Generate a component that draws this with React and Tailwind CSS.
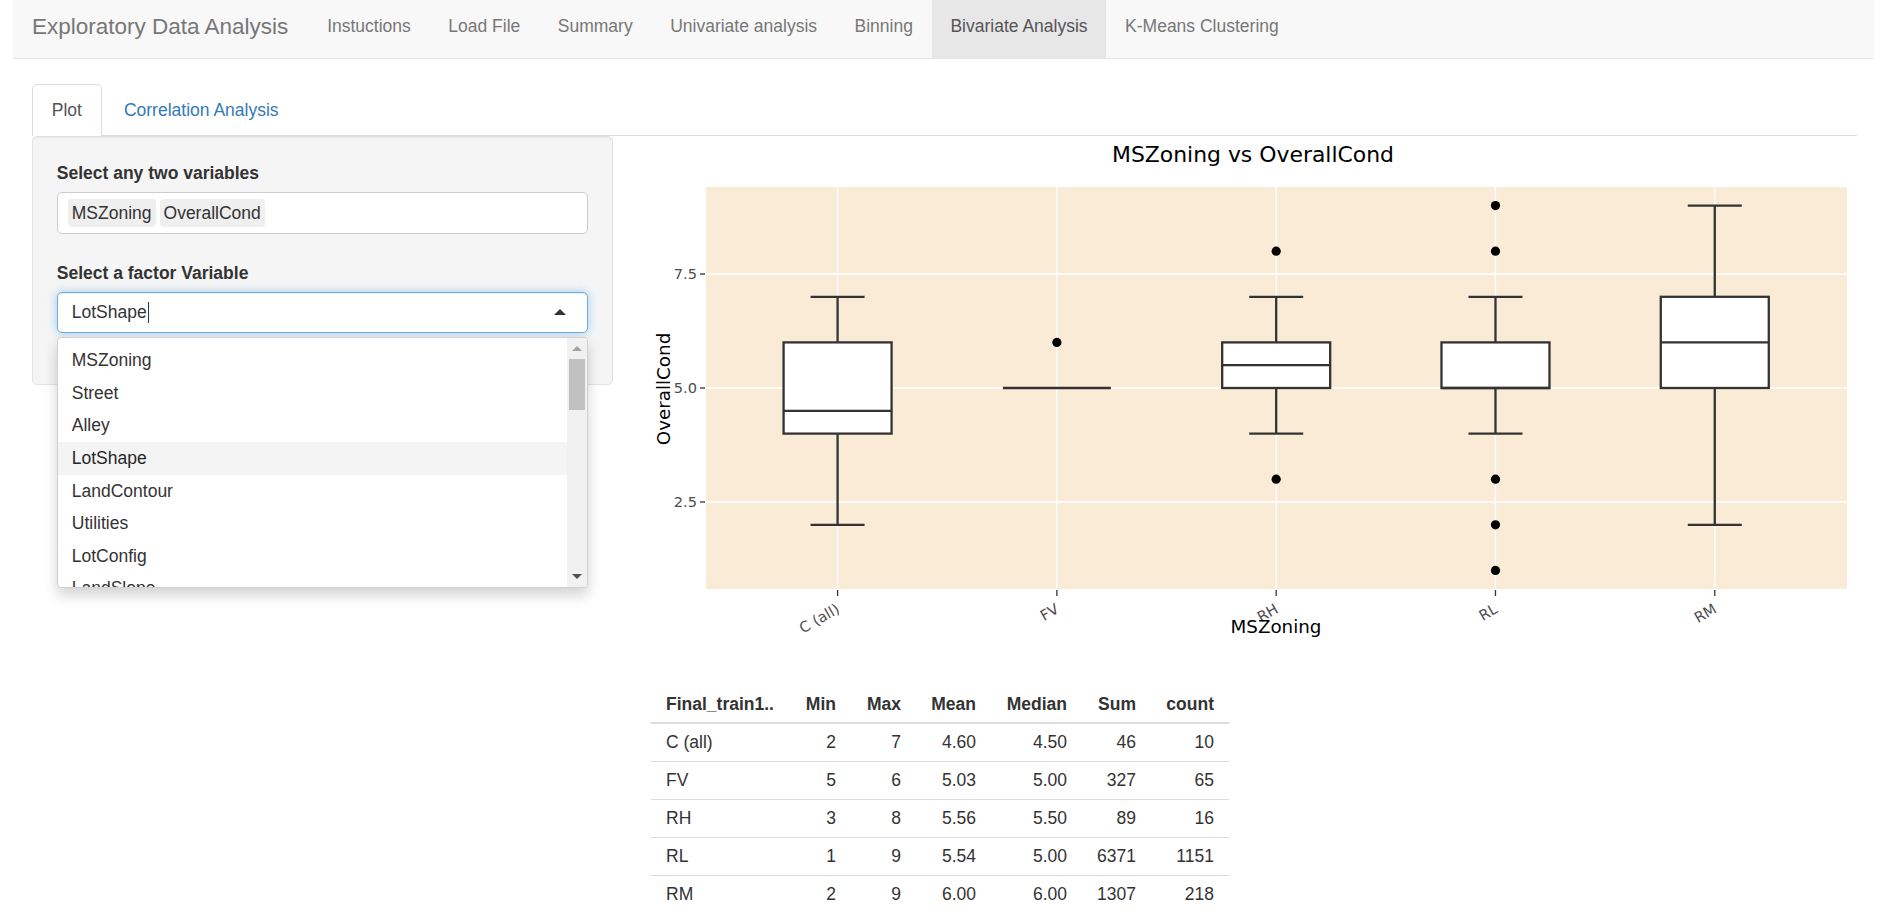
import React from "react";

const navItems = [
  "Instuctions",
  "Load File",
  "Summary",
  "Univariate analysis",
  "Binning",
  "Bivariate Analysis",
  "K-Means Clustering",
];

const options = [
  "MSZoning",
  "Street",
  "Alley",
  "LotShape",
  "LandContour",
  "Utilities",
  "LotConfig",
  "LandSlope",
];

const boxes = [
  { name: "C (all)", lo: 2, q1: 4, med: 4.5, q3: 6, hi: 7, out: [] },
  { name: "FV", lo: 5, q1: 5, med: 5, q3: 5, hi: 5, out: [6] },
  { name: "RH", lo: 4, q1: 5, med: 5.5, q3: 6, hi: 7, out: [3, 8] },
  { name: "RL", lo: 4, q1: 5, med: 5, q3: 6, hi: 7, out: [1, 2, 3, 8, 9] },
  { name: "RM", lo: 2, q1: 5, med: 6, q3: 7, hi: 9, out: [] },
];

const rows = [
  ["C (all)", "2", "7", "4.60", "4.50", "46", "10"],
  ["FV", "5", "6", "5.03", "5.00", "327", "65"],
  ["RH", "3", "8", "5.56", "5.50", "89", "16"],
  ["RL", "1", "9", "5.54", "5.00", "6371", "1151"],
  ["RM", "2", "9", "6.00", "6.00", "1307", "218"],
];

const colW = ["w-[138px]", "w-[62px]", "w-[65px]", "w-[75px]", "w-[91px]", "w-[69px]", "w-[78px]"];
const heads = ["Final_train1..", "Min", "Max", "Mean", "Median", "Sum", "count"];

// plot frame, in svg coordinates (svg sits at x=649, y=136 on the page)
const PL = 57;
const PR = 1198;
const PT = 51;
const PB = 453;
const yv = (v) => 252 - (v - 5) * 45.6;
const xc = (i) => PL + (i + 0.6) * 219.3;
const PLOT_FONT = "DejaVu Sans, Verdana, sans-serif";
const INK = "#333333";

function BoxPlot() {
  return (
    <svg width="1208" height="550" className="block">
      <text x="604" y="26" textAnchor="middle" fontFamily={PLOT_FONT} fontSize="21.9" fill="#000">
        MSZoning vs OverallCond
      </text>
      <rect x={PL} y={PT} width={PR - PL} height={PB - PT} fill="#faebd7" />
      {[2.5, 5, 7.5].map((v) => (
        <line key={v} x1={PL} x2={PR} y1={yv(v)} y2={yv(v)} stroke="#fff" strokeWidth="1.3" />
      ))}
      {boxes.map((b, i) => (
        <line key={b.name} x1={xc(i)} x2={xc(i)} y1={PT} y2={PB} stroke="#fff" strokeWidth="1.3" />
      ))}
      {[2.5, 5, 7.5].map((v) => (
        <g key={v}>
          <line x1="51" x2="56" y1={yv(v)} y2={yv(v)} stroke={INK} strokeWidth="1.3" />
          <text
            x="48"
            y={yv(v) + 5}
            textAnchor="end"
            fontFamily={PLOT_FONT}
            fontSize="14.6"
            fill="#4d4d4d"
          >
            {v.toFixed(1)}
          </text>
        </g>
      ))}
      {boxes.map((b, i) => {
        const x = xc(i);
        return (
          <g key={b.name}>
            <line x1={x} x2={x} y1="454" y2="460" stroke={INK} strokeWidth="1.3" />
            <text
              transform={`translate(${x + 3} 476) rotate(-30)`}
              textAnchor="end"
              fontFamily={PLOT_FONT}
              fontSize="14.6"
              fill="#4d4d4d"
            >
              {b.name}
            </text>
            {b.q1 === b.q3 ? (
              <line x1={x - 54} x2={x + 54} y1={yv(b.med)} y2={yv(b.med)} stroke={INK} strokeWidth="2.3" />
            ) : (
              <g stroke={INK} strokeWidth="2.3">
                <line x1={x} x2={x} y1={yv(b.q3)} y2={yv(b.hi)} />
                <line x1={x} x2={x} y1={yv(b.q1)} y2={yv(b.lo)} />
                <line x1={x - 27} x2={x + 27} y1={yv(b.hi)} y2={yv(b.hi)} />
                <line x1={x - 27} x2={x + 27} y1={yv(b.lo)} y2={yv(b.lo)} />
                <rect x={x - 54} y={yv(b.q3)} width="108" height={yv(b.q1) - yv(b.q3)} fill="#fff" />
                <line x1={x - 54} x2={x + 54} y1={yv(b.med)} y2={yv(b.med)} />
              </g>
            )}
            {b.out.map((o) => (
              <circle key={o} cx={x} cy={yv(o)} r="4.6" fill="#000" />
            ))}
          </g>
        );
      })}
      <text x="627" y="497" textAnchor="middle" fontFamily={PLOT_FONT} fontSize="18.3" fill="#000">
        MSZoning
      </text>
      <text
        transform="translate(21 253) rotate(-90)"
        textAnchor="middle"
        fontFamily={PLOT_FONT}
        fontSize="18.3"
        fill="#000"
      >
        OverallCond
      </text>
    </svg>
  );
}

function FactorSelect() {
  return (
    <div className="relative">
      <div className="flex h-[41px] items-center rounded-[5px] border border-[#66afe9] bg-white pl-[14px] shadow-[inset_0_1px_1px_rgba(0,0,0,0.075),0_0_10px_rgba(102,175,233,0.6)]">
        <span>LotShape</span>
        <span className="ml-px h-[21px] w-px bg-[#333]" />
        <span className="absolute right-[22px] top-[17px] h-0 w-0 border-x-[6px] border-b-[6px] border-x-transparent border-b-[#333]" />
      </div>
      <div className="absolute left-0 right-0 top-[45px] z-10 flex h-[251px] overflow-hidden rounded-[4px] border border-[#d0d0d0] bg-white shadow-[0_7px_14px_rgba(0,0,0,0.18)]">
        <ul className="flex-1 pt-[6.5px]">
          {options.map((o) => (
            <li
              key={o}
              className={
                "flex h-[32.6px] items-center pl-[14px] " +
                (o === "LotShape" ? "bg-[#f4f4f4] text-[#262626]" : "text-[#333]")
              }
            >
              {o}
            </li>
          ))}
        </ul>
        <div className="flex w-[20px] flex-col bg-[#f1f1f1]">
          <div className="flex h-[21px] items-center justify-center">
            <span className="h-0 w-0 border-x-[5px] border-b-[5px] border-x-transparent border-b-[#a3a3a3]" />
          </div>
          <div className="mx-[2px] h-[51px] bg-[#c1c1c1]" />
          <div className="flex-1" />
          <div className="flex h-[21px] items-center justify-center">
            <span className="h-0 w-0 border-x-[5px] border-t-[5px] border-x-transparent border-t-[#505050]" />
          </div>
        </div>
      </div>
    </div>
  );
}

export default function App() {
  return (
    <div className="min-h-screen bg-white font-['Liberation_Sans',Arial,sans-serif] text-[17.5px] leading-[25px] text-[#333]">
      <nav className="ml-[13px] mr-[11px] flex h-[59px] border-b border-[#e7e7e7] bg-[#f8f8f8]">
        <div className="pl-[19px] pr-[20px] pt-[14px] text-[22.5px] leading-[25px] text-[#777]">
          Exploratory Data Analysis
        </div>
        <ul className="flex">
          {navItems.map((n) => (
            <li
              key={n}
              className={
                "px-[18.75px] pt-[14px] " +
                (n === "Bivariate Analysis" ? "bg-[#e7e7e7] text-[#555]" : "text-[#777]")
              }
            >
              {n}
            </li>
          ))}
        </ul>
      </nav>

      <div className="ml-[32px] mr-[28px] mt-[25px]">
        <ul className="flex border-b border-[#ddd]">
          <li className="-mb-px h-[52px] rounded-t-[5px] border border-b-0 border-[#ddd] bg-white px-[18.75px] pt-[12.5px] text-[#555]">
            Plot
          </li>
          <li className="ml-[2.5px] h-[51px] px-[19.75px] pt-[13.5px] text-[#337ab7]">Correlation Analysis</li>
        </ul>

        <div className="flex gap-[36px]">
          <div className="h-[249px] w-[581px] shrink-0 rounded-[5px] border border-[#e3e3e3] bg-[#f5f5f5] px-[23.75px] pt-[23.75px] shadow-[inset_0_1px_1px_rgba(0,0,0,0.05)]">
            <div className="font-bold">Select any two variables</div>
            <div className="mt-[6.25px] flex h-[42px] items-center gap-[4px] rounded-[5px] border border-[#ccc] bg-white pl-[10px]">
              <span className="flex h-[28px] items-center rounded-[4px] bg-[#efefef] px-[4px]">MSZoning</span>
              <span className="flex h-[28px] items-center rounded-[4px] bg-[#efefef] px-[4px]">OverallCond</span>
            </div>
            <div className="mt-[26.75px] font-bold">Select a factor Variable</div>
            <div className="mt-[6.25px]">
              <FactorSelect />
            </div>
          </div>

          <div className="flex-1">
            <BoxPlot />
            <table className="ml-[2px] table-fixed border-collapse">
              <thead>
                <tr className="border-b-2 border-[#ddd]">
                  {heads.map((h, i) => (
                    <th
                      key={h}
                      className={
                        colW[i] + " px-[15px] py-[5.5px] font-bold " + (i === 0 ? "text-left" : "text-right")
                      }
                    >
                      {h}
                    </th>
                  ))}
                </tr>
              </thead>
              <tbody>
                {rows.map((r) => (
                  <tr key={r[0]} className="border-b border-[#ddd] last:border-b-0">
                    {r.map((c, i) => (
                      <td
                        key={i}
                        className={"px-[15px] py-[6px] " + (i === 0 ? "text-left" : "text-right")}
                      >
                        {c}
                      </td>
                    ))}
                  </tr>
                ))}
              </tbody>
            </table>
          </div>
        </div>
      </div>
    </div>
  );
}
